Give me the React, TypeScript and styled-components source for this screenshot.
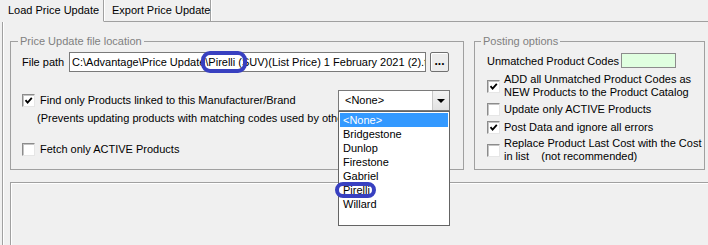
import React from 'react';
import styled, { createGlobalStyle } from 'styled-components';

const GlobalStyle = createGlobalStyle`
  html, body {
    margin: 0;
    padding: 0;
    background: #f0f0f0;
  }
  body {
    font-family: "Liberation Sans", Arial, sans-serif;
    font-size: 11px;
    color: #000;
    overflow: hidden;
  }
  * { box-sizing: border-box; }
`;

const RING = '#3840c0';
const LINE = '#a0a0a0';

const Window = styled.div`
  width: 708px;
  height: 245px;
  overflow: hidden;
  background: #f0f0f0;
`;

const TabBar = styled.div`
  display: flex;
  height: 22px;
`;

const Tab = styled.div<{ $active?: boolean; $width: number }>`
  display: flex;
  align-items: center;
  width: ${(p) => p.$width}px;
  height: 22px;
  padding: 0 0 1px 8px;
  border-right: 1px solid ${LINE};
  border-bottom: 1px solid ${(p) => (p.$active ? 'transparent' : LINE)};
  box-shadow: 1px 0 0 #fff;
  white-space: nowrap;
`;

const TabFiller = styled.div`
  flex: 1;
  border-bottom: 1px solid ${LINE};
`;

const Panel = styled.div`
  margin-left: 2px;
  height: 223px;
  border-left: 1px solid ${LINE};
  box-shadow: inset 1px 0 0 #fff;
  padding: 12px 0 0 7px;
`;

const GroupRow = styled.div`
  display: flex;
  gap: 10px;
`;

const Group = styled.fieldset<{ $width: number }>`
  width: ${(p) => p.$width}px;
  height: 136px;
  margin: 0;
  padding: 0;
  min-width: 0;
  border: 1px solid ${LINE};
  display: flex;
  flex-direction: column;
`;

const Legend = styled.legend<{ $offset: number }>`
  margin-left: ${(p) => p.$offset}px;
  padding: 0 2px;
  line-height: 14px;
  color: #808080;
`;

const Body = styled.div<{ $left: number }>`
  display: flex;
  flex-direction: column;
  padding-left: ${(p) => p.$left}px;
`;

const FieldRow = styled.div<{ $mt: number }>`
  display: flex;
  align-items: center;
  margin-top: ${(p) => p.$mt}px;
`;

const FieldLabel = styled.span<{ $width: number }>`
  width: ${(p) => p.$width}px;
  white-space: nowrap;
`;

const TextBox = styled.div`
  position: relative;
  width: 357px;
  height: 20px;
  background: #fff;
  border: 1px solid #7a7a7a;
  display: flex;
  align-items: center;
`;

const TextValue = styled.span`
  display: block;
  width: 100%;
  padding-left: 2px;
  overflow: hidden;
  white-space: nowrap;
`;

const BrowseButton = styled.button`
  margin-left: 4px;
  width: 19px;
  height: 20px;
  padding: 0 0 4px;
  font: inherit;
  font-size: 12px;
  font-weight: bold;
  line-height: 1;
  background: #ececec;
  border: 1px solid #707070;
  border-radius: 2px;
  box-shadow: inset 1px 1px 0 #fff;
  display: flex;
  align-items: flex-end;
  justify-content: center;
`;

const CheckRow = styled.div<{ $mt: number; $gap?: number }>`
  display: flex;
  align-items: center;
  gap: ${(p) => p.$gap ?? 4}px;
  margin-top: ${(p) => p.$mt}px;
  min-height: 14px;
  line-height: 13px;
  white-space: nowrap;
`;

const Box = styled.span`
  flex: none;
  width: 13px;
  height: 13px;
  display: flex;
  align-items: center;
  justify-content: center;
  background: #fff;
  border: 1px solid;
  border-color: #8c8c8c #e6e6e6 #e6e6e6 #8c8c8c;
  box-shadow: inset 1px 1px 0 #c4c4c4;
`;

const Note = styled.div`
  width: 301px;
  margin: 1px 0 0 15px;
  line-height: 13px;
  white-space: nowrap;
  overflow: hidden;
`;

const Combo = styled.div`
  position: relative;
  margin-left: auto;
  margin-right: 13px;
  width: 112px;
  height: 21px;
  background: #fff;
  border: 1px solid #7a7a7a;
  display: flex;
  align-items: center;
  padding-left: 6px;
`;

const ComboArrow = styled.span`
  margin-left: auto;
  width: 17px;
  height: 100%;
  border-left: 1px solid #c8c8c8;
  background: linear-gradient(#f4f4f4, #e2e2e2);
  display: flex;
  align-items: center;
  justify-content: center;

  &::after {
    content: '';
    border-left: 4px solid transparent;
    border-right: 4px solid transparent;
    border-top: 4px solid #000;
  }
`;

const DropList = styled.ul`
  position: absolute;
  top: 20px;
  left: -1px;
  width: 112px;
  height: 115px;
  margin: 0;
  padding: 1px 1px 0;
  list-style: none;
  background: #fff;
  border: 1px solid #646464;
  z-index: 2;
`;

const DropItem = styled.li<{ $selected?: boolean }>`
  position: relative;
  height: 14px;
  line-height: 14px;
  padding-left: 3px;
  background: ${(p) => (p.$selected ? '#3399ff' : 'transparent')};
  color: ${(p) => (p.$selected ? '#fff' : '#000')};
`;

const Ring = styled.span<{ $x: number; $y: number; $w: number; $h: number }>`
  position: absolute;
  left: ${(p) => p.$x}px;
  top: ${(p) => p.$y}px;
  width: ${(p) => p.$w}px;
  height: ${(p) => p.$h}px;
  border: 4px solid ${RING};
  border-radius: 9px;
  pointer-events: none;
  z-index: 3;
`;

const CodesBox = styled.span`
  width: 55px;
  height: 15px;
  background: #e0ffe0;
  border: 1px solid #8c8c8c;
`;

const LowerPanel = styled.div`
  margin-top: 12px;
  height: 80px;
  border-top: 1px solid ${LINE};
  border-left: 1px solid ${LINE};
  box-shadow: inset 1px 1px 0 #fff;
`;

function Check({ on }: { on?: boolean }) {
  return (
    <Box>
      {on && (
        <svg width="9" height="9" viewBox="0 0 9 9">
          <path d="M1.5 4.2 L3.6 6.6 L7.8 1.8" fill="none" stroke="#000" strokeWidth="1.8" />
        </svg>
      )}
    </Box>
  );
}

const brands = ['<None>', 'Bridgestone', 'Dunlop', 'Firestone', 'Gabriel', 'Pirelli', 'Willard'];

export default function App() {
  return (
    <Window>
      <GlobalStyle />
      <TabBar>
        <Tab $active $width={104}>Load Price Update</Tab>
        <Tab $width={107}>Export Price Update</Tab>
        <TabFiller />
      </TabBar>
      <Panel>
        <GroupRow>
          <Group $width={454}>
            <Legend $offset={7}>Price Update file location</Legend>
            <Body $left={11}>
              <FieldRow $mt={4}>
                <FieldLabel $width={47}>File path</FieldLabel>
                <TextBox>
                  <TextValue>C:\Advantage\Price Update\Pirelli (SUV)(List Price) 1 February 2021 (2).txt</TextValue>
                  <Ring $x={131} $y={-2} $w={46} $h={22} />
                </TextBox>
                <BrowseButton>...</BrowseButton>
              </FieldRow>
              <CheckRow $mt={18} $gap={5}>
                <Check on />
                <span>Find only Products linked to this Manufacturer/Brand</span>
                <Combo>
                  <span>&lt;None&gt;</span>
                  <ComboArrow />
                  <DropList>
                    {brands.map((b, i) => (
                      <DropItem key={b} $selected={i === 0}>
                        {b}
                        {b === 'Pirelli' && <Ring $x={-5} $y={-1} $w={41} $h={16} />}
                      </DropItem>
                    ))}
                  </DropList>
                </Combo>
              </CheckRow>
              <Note>(Prevents updating products with matching codes used by other Manufacturers/Brands)</Note>
              <CheckRow $mt={17} $gap={5}>
                <Check />
                <span>Fetch only ACTIVE Products</span>
              </CheckRow>
            </Body>
          </Group>
          <Group $width={231}>
            <Legend $offset={6}>Posting options</Legend>
            <Body $left={12}>
              <FieldRow $mt={5}>
                <FieldLabel $width={134}>Unmatched Product Codes</FieldLabel>
                <CodesBox />
              </FieldRow>
              <CheckRow $mt={5}>
                <Check on />
                <span>
                  ADD all Unmatched Product Codes as
                  <br />
                  NEW Products to the Product Catalog
                </span>
              </CheckRow>
              <CheckRow $mt={3}>
                <Check />
                <span>Update only ACTIVE Products</span>
              </CheckRow>
              <CheckRow $mt={4}>
                <Check on />
                <span>Post Data and ignore all errors</span>
              </CheckRow>
              <CheckRow $mt={3}>
                <Check />
                <span>
                  Replace Product Last Cost with the Cost
                  <br />
                  in list&nbsp;&nbsp;&nbsp; (not recommended)
                </span>
              </CheckRow>
            </Body>
          </Group>
        </GroupRow>
        <LowerPanel />
      </Panel>
    </Window>
  );
}
